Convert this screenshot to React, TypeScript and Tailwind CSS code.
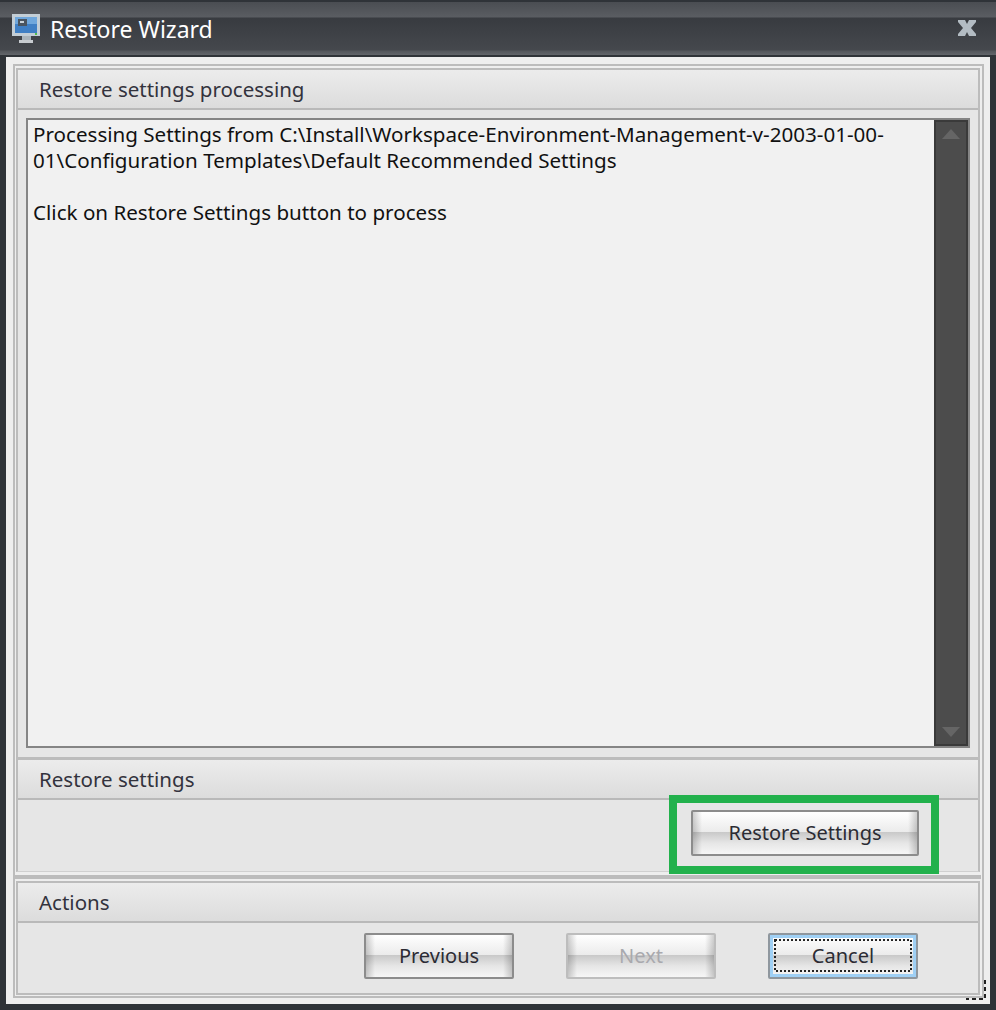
import React from "react";

const font = { fontFamily: '"Noto Sans", Tahoma, sans-serif' };

function Monitor() {
  return (
    <svg width="28" height="30" viewBox="0 0 28 30" className="shrink-0">
      <rect x="0" y="0" width="28" height="22" fill="#c3ced6" />
      <rect x="3" y="3" width="22" height="16" fill="#3f7fc4" />
      <rect x="3" y="3" width="22" height="7" fill="#6fa7dc" />
      <rect x="6" y="5" width="9" height="7" fill="#4a5560" />
      <rect x="8" y="7" width="4" height="2" fill="#c9d3da" />
      <rect x="23" y="19" width="2" height="2" fill="#54c04a" />
      <rect x="10" y="22" width="9" height="4" fill="#aab4bb" />
      <rect x="7" y="26" width="14" height="3" fill="#c8ccd0" />
    </svg>
  );
}

function XIcon() {
  return (
    <svg width="18" height="17" viewBox="0 0 18 17" className="shrink-0">
      <path d="M0 0H7L9 4L11 0H18V2L13 8L18 14V16H11L9 12L7 16H0V14L5 8L0 2Z" fill="#b3bcc3" />
    </svg>
  );
}

function Btn({ label, kind = "normal" }: { label: string; kind?: "normal" | "disabled" | "focus" }) {
  const border =
    kind === "disabled" ? "border-[#bdbdbd]" : kind === "focus" ? "border-[#8f979e]" : "border-[#8c8c8c]";
  const text = kind === "disabled" ? "text-[#a9a9ae]" : "text-[#2b2b33]";
  return (
    <button className={`relative block h-[46px] w-full overflow-hidden rounded-[2px] border-2 p-0 ${border}`}>
      <span className="flex h-full w-full flex-col">
        <span className="h-[20px] bg-gradient-to-b from-[#ffffff] to-[#ebebeb]" />
        <span className="flex-1 bg-gradient-to-b from-[#c8c8c8] via-[#e6e6e6] to-[#f6f6f6]" />
      </span>
      {kind === "focus" ? (
        <span className="absolute inset-0 border-[3px] border-[#9fd0f5]" />
      ) : (
        <span className="absolute inset-0 bg-[linear-gradient(to_right,#00000030,transparent_9px,transparent_calc(100%-9px),#00000030)]" />
      )}
      {kind === "focus" && (
        <svg width="138" height="33" viewBox="0 0 138 33" className="absolute left-[4px] top-[4px]">
          <rect x="1" y="1" width="136" height="31" fill="none" stroke="#222" strokeWidth="2" strokeDasharray="2 2" />
        </svg>
      )}
      <span className={`absolute inset-0 flex items-center justify-center text-[20px] ${text}`} style={font}>
        {label}
      </span>
    </button>
  );
}

function Header({ title }: { title: string }) {
  return (
    <div className="flex h-[40px] shrink-0 items-center border-b-2 border-[#b9b9b9] bg-gradient-to-b from-[#ececec] to-[#dcdcdc] pl-[21px]">
      <span className="text-[20.5px] text-[#33333d]" style={font}>
        {title}
      </span>
    </div>
  );
}

export default function App() {
  return (
    <div className="relative flex h-[1010px] w-[996px] flex-col overflow-hidden bg-[#2f3338]">
      <header className="flex h-[57px] shrink-0 items-center justify-between bg-[linear-gradient(to_bottom,#2f3338_0,#2f3338_2px,#4a4d52_2px,#5a5d62_17px,#383b40_18px,#45484d_50px,#53565b_51px,#62656a_55px,#2f3338_55px)] pl-[12px] pr-[20px]">
        <div className="flex items-center gap-[10px]">
          <Monitor />
          <span className="text-[23px] leading-[30px] text-white" style={font}>
            Restore Wizard
          </span>
        </div>
        <XIcon />
      </header>
      <main className="ml-[6px] mr-[6px] flex h-[947px] flex-col bg-[#eeeeee] pl-[7px] pr-[6px] pt-[7px]">
        <div className="flex h-[934px] flex-col border-2 border-[#bcbcbc] pl-px pr-[2px] pt-[2px] pb-[2px]">
          <section className="flex h-[689px] shrink-0 flex-col border-x-2 border-t-2 border-[#bcbcbc] bg-[#e6e6e6]">
            <Header title="Restore settings processing" />
            <div className="mx-[8px] mt-[8px] flex h-[630px] border-2 border-[#858585] bg-[#f1f1f1]">
              <div className="flex-1 pl-[5px] pt-[1px] text-[20.6px] leading-[26px] text-[#111]" style={font}>
                <p>Processing Settings from C:\Install\Workspace-Environment-Management-v-2003-01-00-</p>
                <p>01\Configuration Templates\Default Recommended Settings</p>
                <p className="mt-[26px]">Click on Restore Settings button to process</p>
              </div>
              <div className="flex w-[34px] flex-col items-center justify-between border-2 border-[#3a3a3a] bg-[#4c4c4c] py-[7px]">
                <svg width="18" height="10" viewBox="0 0 18 10"><path d="M9 0L18 10H0Z" fill="#656565" /></svg>
                <svg width="18" height="10" viewBox="0 0 18 10"><path d="M0 0H18L9 10Z" fill="#656565" /></svg>
              </div>
            </div>
          </section>
          <section className="flex h-[115px] shrink-0 flex-col border-x-2 border-t-[3px] border-b border-x-[#bcbcbc] border-t-[#bcbcbc] border-b-[#d0d0d0] bg-[#e6e6e6]">
            <Header title="Restore settings" />
            <div className="flex flex-1 items-start justify-end pr-[59px] pt-[10px]">
              <div className="w-[228px]">
                <Btn label="Restore Settings" />
              </div>
            </div>
          </section>
          <div className="-mx-px mt-[3px] h-[4px] shrink-0 bg-[#bcbcbc]" />
          <div className="h-[2px] shrink-0" />
          <section className="flex h-[114px] shrink-0 flex-col border-2 border-[#bcbcbc] bg-[#e6e6e6]">
            <Header title="Actions" />
            <div className="flex flex-1 items-start justify-end gap-[52px] pr-[60px] pt-[10px]">
              <div className="w-[150px]"><Btn label="Previous" /></div>
              <div className="w-[150px]"><Btn label="Next" kind="disabled" /></div>
              <div className="w-[150px]"><Btn label="Cancel" kind="focus" /></div>
            </div>
          </section>
        </div>
      </main>
      <div className="pointer-events-none absolute left-[669px] top-[795px] h-[79px] w-[270px] border-[8px] border-[#22b14c]" />
      <svg width="22" height="22" viewBox="0 0 22 22" className="absolute left-[966px] top-[979px]">
        <path d="M19 1V20H0" fill="none" stroke="#222" strokeWidth="2" strokeDasharray="4 3" />
      </svg>
    </div>
  );
}
